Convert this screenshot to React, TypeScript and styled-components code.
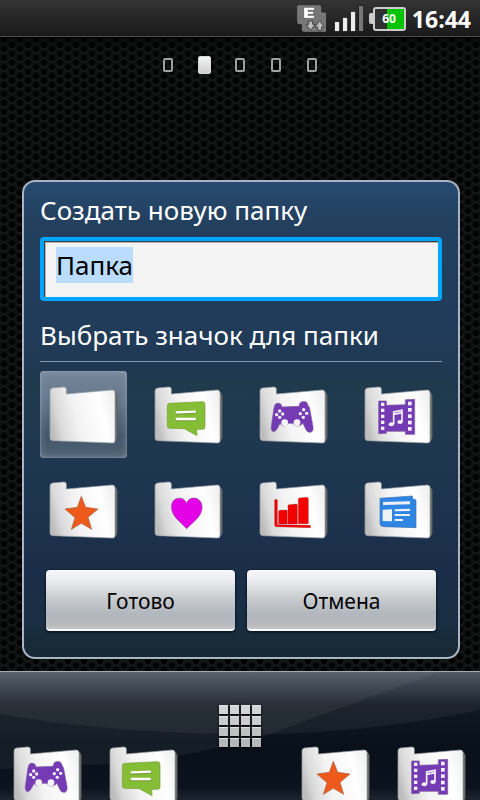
import React, { useEffect, useRef, useState } from "react";
import styled, { createGlobalStyle, css } from "styled-components";

const GlobalStyle = createGlobalStyle`
  * { box-sizing: border-box; }
  body {
    margin: 0;
    background: #0c0d0e;
    font-family: "Noto Sans", "Open Sans", sans-serif;
  }
  button, input { font: inherit; margin: 0; }
`;

const Screen = styled.div`
  display: flex;
  flex-direction: column;
  height: 100vh;
  overflow: hidden;
  background:
    linear-gradient(#00000066, transparent 12px) 0 38px no-repeat,
    radial-gradient(circle at 4px 4px, #020203 2px, #060707 3px, transparent 4px) 0 0 / 16px 9px,
    radial-gradient(circle at 12px 0px, #020203 2px, #060707 3px, transparent 4px) 0 0 / 16px 9px,
    radial-gradient(circle at 12px 9px, #020203 2px, #060707 3px, transparent 4px) 0 0 / 16px 9px,
    radial-gradient(circle at 4px 5px, #1d2022 3px, transparent 4px) 0 0 / 16px 9px,
    radial-gradient(circle at 12px 1px, #1d2022 3px, transparent 4px) 0 0 / 16px 9px,
    #101213;
`;

const StatusBar = styled.header`
  display: flex;
  flex: none;
  align-items: center;
  justify-content: flex-end;
  height: 38px;
  padding: 0 9px 1px 0;
  background: linear-gradient(#343434, #1b1b1b 34px, #191919 36px, #4d4d4d 36px, #4d4d4d 37px, #000 37px);
`;

const StatusIcon = styled.svg<{ $gap: number }>`
  display: block;
  flex: none;
  margin-right: ${(p) => p.$gap}px;
`;

const Clock = styled.time`
  color: #fff;
  font-family: "Open Sans", "Noto Sans", sans-serif;
  font-size: 23px;
  font-weight: 700;
  line-height: 36px;
`;

const Pages = styled.nav`
  display: flex;
  flex: none;
  align-items: center;
  justify-content: center;
  height: 54px;
`;

const PageButton = styled.button`
  display: flex;
  align-items: center;
  justify-content: center;
  width: 36px;
  height: 36px;
  padding: 0;
  border: 0;
  background: none;
`;

const PageDot = styled.span<{ $active: boolean }>`
  width: 10px;
  height: 14px;
  border: 2px solid #a0a2a2;
  border-radius: 2px;
  ${(p) =>
    p.$active &&
    css`
      width: 13px;
      height: 18px;
      border: 1px solid #d8d8d8;
      background: linear-gradient(#f4f4f4, #cfcfcf);
    `}
`;

const Dialog = styled.form`
  flex: none;
  margin: 88px 20px 12px 22px;
  padding: 12px 16px 26px;
  border: 2px solid #a9b5c4;
  border-radius: 13px;
  background: linear-gradient(
    #274b71 0,
    #23405f 8%,
    #213c5a 30%,
    #1f3852 41%,
    #203a4d 42%,
    #1e3650 60%,
    #1b2e49 82%,
    #192e42 93%,
    #182833 100%
  );
`;

const Title = styled.label`
  display: block;
  height: 43px;
  color: #fff;
  font-size: 26px;
  line-height: 33px;
  white-space: nowrap;
`;

const NameInput = styled.input`
  display: block;
  width: 100%;
  height: 64px;
  padding: 0 12px 9px;
  border: 4px solid #00a5ff;
  border-radius: 4px;
  outline: none;
  background: #f3f3f3;
  box-shadow: inset 1px 1px 0 #3a3a44, inset 2px 2px 0 #b8b4b0;
  color: #000;
  font-size: 26px;
  &::selection {
    background: #b9dcff;
    color: #000;
  }
`;

const Heading = styled.h2`
  margin: 17px 0 9px;
  padding-bottom: 9px;
  border-bottom: 1px solid #8796a6;
  color: #fff;
  font-size: 26px;
  font-weight: 400;
  line-height: 34px;
  white-space: nowrap;
`;

const IconGrid = styled.div`
  display: grid;
  grid-template-columns: repeat(4, 87px);
  justify-content: space-between;
  row-gap: 8px;
`;

const IconButton = styled.button<{ $selected: boolean }>`
  display: flex;
  align-items: center;
  justify-content: center;
  height: 87px;
  padding: 2px 0 0 1px;
  border: 0;
  border-radius: 4px;
  background: none;
  ${(p) =>
    p.$selected &&
    css`
      background: linear-gradient(#77869a, #65778b 35%, #44566b 75%, #506274);
      box-shadow: inset 0 0 9px #a0adb970, inset 0 0 2px #a7b4c0;
    `}
`;

const Actions = styled.div`
  display: grid;
  grid-template-columns: 1fr 1fr;
  gap: 12px;
  margin: 17px 6px 0;
`;

const ActionButton = styled.button`
  height: 61px;
  padding: 2px 0 0;
  border: 0;
  border-bottom: 2px solid #fff;
  border-radius: 4px;
  background: linear-gradient(#f8f7fc, #e6e8eb 22%, #c8cccf 48%, #b2b7bf 74%, #b8b9bf 92%, #c6c6c8);
  box-shadow: 0 1px 2px 1px #0b1a28;
  color: #000;
  font-size: 21px;
  line-height: 30px;
`;

const DockBar = styled.footer`
  position: relative;
  display: grid;
  flex: 1 0 129px;
  grid-template-columns: repeat(5, 1fr);
  align-items: start;
  overflow: hidden;
  border-top: 1px solid #aaaab0;
  background: linear-gradient(#49525d, #323b46 12px, #101821 34px, #08101a 76px, #0a131d 115px, #1b2431 128px);
`;

const DockGlow = styled.svg`
  position: absolute;
  inset: 0;
  width: 100%;
  height: 100%;
`;

const DockButton = styled.button`
  position: relative;
  display: flex;
  padding: 75px 0 0 14px;
  border: 0;
  background: none;
`;

const AppsButton = styled.button`
  position: relative;
  display: grid;
  grid-template-columns: repeat(4, 9px);
  grid-auto-rows: 9px;
  gap: 2px;
  justify-content: center;
  padding: 33px 0 0;
  border: 0;
  background: none;
`;

const AppsTile = styled.span<{ $row: number }>`
  background: ${(p) => ["#d3d4d6", "#cbccce", "#bfc1c3", "#b4b6b8"][p.$row]};
  box-shadow: 0 1px 2px #000, inset 0 1px 0 #e2e3e4;
`;

type Kind = "empty" | "chat" | "games" | "media" | "star" | "heart" | "chart" | "news";

const glyphs: Record<Kind, React.ReactNode> = {
  empty: null,
  chat: (
    <g>
      <path d="M45 49 L142 44 Q150 44 150 52 V119 Q150 127 142 127 H125 L126 146 L88 125 L45 124 Q37 124 37 116 V57 Q37 49 45 49Z" fill="#85bd35" stroke="#739d3b" strokeWidth="2" />
      <path d="M65 78 L120 75 M65 98 H120" stroke="#779b43" strokeWidth="10" strokeLinecap="round" />
      <path d="M65 76 L120 74 M65 96 H120" stroke="#fff" strokeWidth="7" strokeLinecap="round" />
    </g>
  ),
  games: (
    <g>
      <path d="M44 56 Q46 49 52 49 H58 Q64 50 66 60 L117 58 Q119 45 126 44 H136 Q142 45 144 55 Q149 60 151 75 L159 119 Q161 136 149 136 Q140 136 135 122 L129 109 Q121 119 109 117 Q102 116 99 109 H85 Q80 117 72 117 Q64 116 60 109 L54 121 Q47 135 40 134 Q32 132 34 117 L40 76 Q41 64 44 56Z" fill="#743bb5" stroke="#7c5a9e" strokeWidth="2" />
      <g fill="#f6f3fa">
        <circle cx="74" cy="107" r="10" />
        <circle cx="111" cy="107" r="10" />
        <circle cx="59" cy="72" r="5" />
        <circle cx="59" cy="91" r="5" />
        <circle cx="50" cy="83" r="5" />
        <circle cx="68" cy="81" r="5" />
        <circle cx="131" cy="68" r="5" />
        <circle cx="130" cy="91" r="5" />
        <circle cx="121" cy="80" r="5" />
        <circle cx="140" cy="79" r="5" />
      </g>
    </g>
  ),
  media: (
    <g>
      <path d="M41 42 H64 V55 L121 53 V38 L149 37 V142 H121 V133 H64 V139 L41 140Z" fill="#743bb5" stroke="#7a5a9c" strokeWidth="2" />
      <g fill="#f4f1f8">
        {[0, 1, 2, 3, 4].map((i) => (
          <React.Fragment key={i}>
            <rect x="48" y={47 + i * 18} width="10" height="10" />
            <rect x="129" y={44 + i * 19} width="11" height="11" />
          </React.Fragment>
        ))}
        <ellipse cx="79" cy="112" rx="8" ry="6" />
        <ellipse cx="105" cy="105" rx="8" ry="6" />
      </g>
      <path d="M86 112 V75 L111 70 V105 M86 82 L111 77" fill="none" stroke="#f4f1f8" strokeWidth="5" />
    </g>
  ),
  star: <path d="M94 43 L107 76 L144 81 L114 106 L125 142 L94 124 L64 142 L75 107 L45 81 L82 76Z" fill="#ed5a1c" stroke="#a3603f" strokeWidth="2" />,
  heart: <path d="M95 65 C99 49 115 45 128 51 C142 59 145 78 136 96 C128 112 110 124 95 140 C80 124 63 112 55 96 C46 78 48 58 62 51 C77 45 90 50 95 65Z" fill="#e400e7" stroke="#8b3f90" strokeWidth="2" />,
  chart: (
    <g fill="#f40000" stroke="#9d2020" strokeWidth="1">
      <path d="M44 54 Q48 50 52 54 V128 L150 130 Q153 132 151 137 L48 134 Q44 134 44 130Z" />
      <path d="M56 88 Q57 85 60 85 L79 84 Q82 84 82 88 V126 H56Z" />
      <path d="M84 71 Q84 68 88 68 L108 66 Q112 66 112 70 V126 H84Z" />
      <path d="M115 52 Q115 48 119 48 L140 46 Q145 46 145 51 V125 H115Z" />
    </g>
  ),
  news: (
    <g>
      <path d="M45 49 L142 42 L143 50 L153 54 V137 L57 134 Q45 134 45 124Z" fill="#2e85e3" stroke="#3f73ad" strokeWidth="2" />
      <path d="M54 60 L135 58 V67 L54 69Z M53 83 L81 82 V118 L53 117Z M89 82 L135 80 V87 L89 88Z M89 96 H135 V102 H89Z M89 111 H114 V117 H89Z" fill="#eef2f7" />
    </g>
  ),
};

const FolderSvg = styled.svg`
  display: block;
  flex: none;
  overflow: visible;
`;

function Folder({ kind, id }: { kind: Kind; id: string }) {
  return (
    <FolderSvg width="68" height="57" viewBox="0 0 204 171" aria-hidden="true">
      <defs>
        <linearGradient id={id} x1="0" y1="0.6" x2="1" y2="0.4">
          <stop offset="0" stopColor="#bcbcbc" />
          <stop offset="0.14" stopColor="#dadada" />
          <stop offset="0.4" stopColor="#f3f3f3" />
          <stop offset="0.8" stopColor="#fff" />
          <stop offset="1" stopColor="#f1f1f1" />
        </linearGradient>
      </defs>
      <path d="M186 12 L196 15 Q202 20 202 28 V151 Q202 160 190 169Z" fill="#6d6d6b" stroke="#4c5358" strokeWidth="1" />
      <path d="M0 12 Q0 4 8 3 L41 0 Q49 0 49 6 V21 L187 9 Q195 9 195 18 V160 Q195 169 187 168 L8 161 Q0 160 0 152Z" fill={`url(#${id})`} stroke="#99a0a5" strokeWidth="2" />
      {glyphs[kind]}
    </FolderSvg>
  );
}

const choices: { kind: Kind; name: string }[] = [
  { kind: "empty", name: "Папка" },
  { kind: "chat", name: "Сообщения" },
  { kind: "games", name: "Игры" },
  { kind: "media", name: "Медиа" },
  { kind: "star", name: "Избранное" },
  { kind: "heart", name: "Любимое" },
  { kind: "chart", name: "Графики" },
  { kind: "news", name: "Новости" },
];

function StatusIcons() {
  return (
    <>
      <StatusIcon $gap={8} width="29" height="27" viewBox="0 0 87 81" aria-hidden="true">
        <path d="M4 2 H68 Q71 2 71 5 V24 H83 Q86 24 86 27 V79 H20 Q16 79 16 75 V56 H6 Q2 56 2 52 V5 Q2 2 4 2Z" fill="#777" stroke="#909090" strokeWidth="2" />
        <path d="M20 7 H53 V16 H33 V19 H50 V28 H33 V31 H53 V40 H20Z" fill="#fff" stroke="#505050" strokeWidth="2" />
        <path d="M35 48 H47 V58 H55 L41 76 L27 58 H35Z M62 76 V66 H54 L68 47 L82 66 H74 V76Z" fill="#bcbcbc" stroke="#444" strokeWidth="3" />
      </StatusIcon>
      <StatusIcon $gap={5} width="30" height="27" viewBox="0 0 90 81" aria-hidden="true">
        <g stroke="#111" strokeWidth="2">
          <rect x="2" y="50" width="15" height="29" fill="#ededed" />
          <rect x="26" y="37" width="15" height="42" fill="#ededed" />
          <rect x="50" y="19" width="15" height="60" fill="#ededed" />
          <rect x="74" y="2" width="15" height="77" fill="#777" />
        </g>
      </StatusIcon>
      <StatusIcon $gap={6} width="37" height="24" viewBox="0 0 37 24" role="img" aria-label="60">
        <rect x="0" y="6" width="6" height="11" rx="2" fill="#ccc" />
        <rect x="5" y="1" width="31" height="22" rx="2" fill="#303030" stroke="#ccc" strokeWidth="2" />
        <rect x="18" y="2" width="17" height="20" fill="#00c400" />
        <text x="20" y="16" textAnchor="middle" fill="#fff" fontFamily="Noto Sans, sans-serif" fontSize="12" fontWeight="700">60</text>
      </StatusIcon>
    </>
  );
}

export default function App() {
  const [page, setPage] = useState(1);
  const [choice, setChoice] = useState<Kind>("empty");
  const [name, setName] = useState("Папка");
  const inputRef = useRef<HTMLInputElement>(null);

  useEffect(() => {
    inputRef.current?.focus();
    inputRef.current?.select();
  }, []);

  return (
    <>
      <GlobalStyle />
      <Screen>
        <StatusBar>
          <StatusIcons />
          <Clock>16:44</Clock>
        </StatusBar>

        <Pages>
          {[0, 1, 2, 3, 4].map((i) => (
            <PageButton key={i} type="button" aria-label={`Экран ${i + 1}`} onClick={() => setPage(i)}>
              <PageDot $active={i === page} />
            </PageButton>
          ))}
        </Pages>

        <Dialog onSubmit={(e) => e.preventDefault()}>
          <Title htmlFor="folder-name">Создать новую папку</Title>
          <NameInput id="folder-name" ref={inputRef} value={name} autoComplete="off" spellCheck={false} onChange={(e) => setName(e.target.value)} />
          <Heading>Выбрать значок для папки</Heading>
          <IconGrid>
            {choices.map((c) => (
              <IconButton key={c.kind} type="button" aria-label={c.name} aria-pressed={c.kind === choice} $selected={c.kind === choice} onClick={() => setChoice(c.kind)}>
                <Folder kind={c.kind} id={`choice-${c.kind}`} />
              </IconButton>
            ))}
          </IconGrid>
          <Actions>
            <ActionButton type="submit">Готово</ActionButton>
            <ActionButton type="button">Отмена</ActionButton>
          </Actions>
        </Dialog>

        <DockBar>
          <DockGlow viewBox="0 0 480 128" preserveAspectRatio="none" aria-hidden="true">
            <defs>
              <linearGradient id="glow" x1="0" y1="0" x2="0" y2="1">
                <stop offset="0" stopColor="#fff" stopOpacity="0.05" />
                <stop offset="1" stopColor="#fff" stopOpacity="0.05" />
              </linearGradient>
            </defs>
            <path d="M0 0 H480 V38 Q370 61 260 62 Q110 62 0 42Z" fill="url(#glow)" />
            <path d="M0 0 H440 Q350 32 270 62 Q170 92 80 93 Q40 95 0 97Z" fill="url(#glow)" />
          </DockGlow>
          <DockButton type="button" aria-label="Игры"><Folder kind="games" id="dock-games" /></DockButton>
          <DockButton type="button" aria-label="Сообщения"><Folder kind="chat" id="dock-chat" /></DockButton>
          <AppsButton type="button" aria-label="Приложения">
            {Array.from({ length: 16 }, (_, i) => (
              <AppsTile key={i} $row={Math.floor(i / 4)} />
            ))}
          </AppsButton>
          <DockButton type="button" aria-label="Избранное"><Folder kind="star" id="dock-star" /></DockButton>
          <DockButton type="button" aria-label="Медиа"><Folder kind="media" id="dock-media" /></DockButton>
        </DockBar>
      </Screen>
    </>
  );
}
